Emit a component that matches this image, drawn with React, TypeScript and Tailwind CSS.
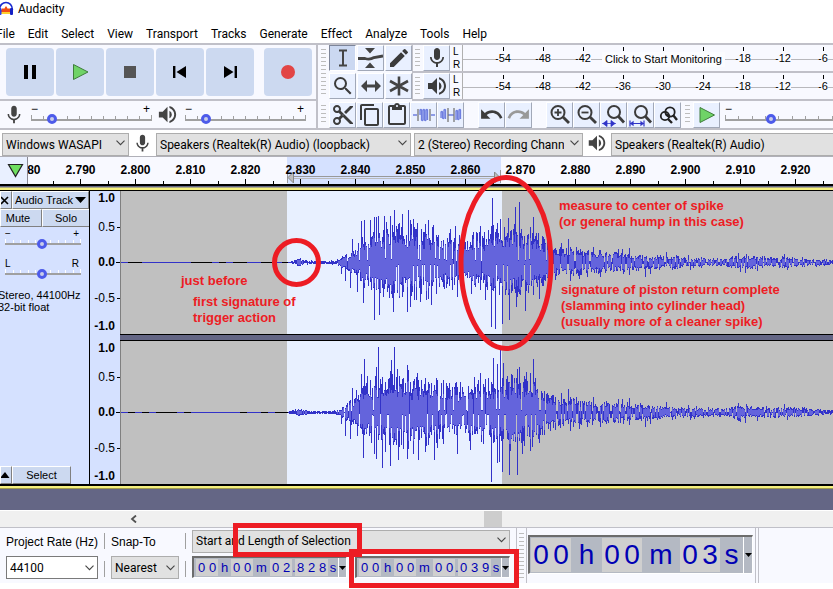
import type { ReactNode } from "react";
import { MdContentCopy, MdContentCut, MdContentPaste, MdEdit, MdMic, MdRedo, MdSearch, MdUndo, MdVolumeUp } from "react-icons/md";

type Spike = [number, number];

/* ---------- waveform data: [x, height] in pixels from the centre line ---------- */

const ENVELOPE: Spike[] = [
  [0, 0], [165, 0], [169, 1], [174, 3], [178, 4], [186, 2], [200, 1], [214, 2], [220, 5], [226, 11],
  [232, 16], [238, 24], [245, 34], [262, 42], [285, 44], [310, 41], [325, 35], [345, 31], [365, 34],
  [375, 42], [392, 42], [410, 38], [425, 28], [436, 18], [450, 18], [465, 15], [490, 11], [510, 10],
  [540, 7], [570, 6], [600, 4], [618, 8], [640, 6], [665, 6], [690, 4], [720, 2], [1100, 1],
];

const TAIL_UP: Spike[] = [
  [440, 19], [447, 23], [449, 15], [455, 15], [461, 11], [472, 15], [488, 8], [497, 13], [501, 13],
  [508, 14], [521, 7], [545, 10], [567, 7], [617, 9], [625, 8], [663, 8],
];
const TAIL_DOWN: Spike[] = [
  [434, 17], [449, 18], [458, 16], [466, 14], [479, 14], [492, 9], [502, 11], [508, 12], [524, 14],
  [529, 11], [551, 7], [569, 7], [619, 9], [624, 10], [636, 8], [666, 7],
];

const LEFT_UP: Spike[] = [
  [231, 23], [240, 41], [243, 42], [249, 42], [253, 45], [255, 45], [257, 46], [263, 46], [269, 46],
  [273, 52], [281, 48], [287, 52], [289, 42], [292, 43], [296, 39], [302, 30], [311, 35], [316, 25],
  [326, 24], [334, 36], [338, 27], [351, 27], [355, 30], [359, 36], [363, 30], [367, 32], [371, 64],
  [376, 39], [379, 43], [387, 44], [394, 55], [398, 60], [406, 27], [409, 35], [412, 45], [414, 26],
  [426, 21], ...TAIL_UP,
];
const LEFT_DOWN: Spike[] = [
  [220, 11], [224, 18], [229, 25], [236, 29], [242, 40], [253, 57], [258, 52], [262, 34], [272, 49],
  [281, 34], [286, 49], [289, 44], [295, 37], [299, 39], [310, 42], [315, 31], [336, 34], [350, 31],
  [364, 37], [370, 64], [374, 66], [381, 61], [388, 57], [395, 44], [399, 32], [404, 48], [412, 32],
  [418, 36], ...TAIL_DOWN,
];
const RIGHT_UP: Spike[] = [
  [231, 24], [235, 22], [240, 38], [243, 53], [246, 36], [249, 32], [255, 45], [257, 65], [259, 33],
  [264, 30], [269, 41], [270, 52], [273, 65], [276, 43], [286, 47], [289, 30], [293, 33], [296, 39],
  [300, 32], [304, 34], [316, 32], [322, 32], [328, 29], [334, 29], [339, 30], [353, 35], [359, 39],
  [364, 33], [367, 34], [372, 54], [376, 48], [379, 63], [382, 49], [386, 36], [390, 38], [396, 43],
  [398, 45], [405, 40], [412, 53], [414, 34], [420, 21], [426, 19], [432, 17], ...TAIL_UP,
];
const RIGHT_DOWN: Spike[] = [
  [220, 11], [224, 23], [229, 26], [236, 23], [242, 45], [253, 41], [255, 46], [261, 55], [264, 39],
  [269, 53], [272, 32], [277, 47], [286, 46], [292, 41], [297, 47], [304, 39], [313, 47], [316, 35],
  [322, 31], [336, 41], [349, 37], [362, 31], [370, 69], [376, 50], [378, 49], [381, 59], [388, 62],
  [396, 62], [401, 41], [409, 38], [418, 30], [423, 22], [432, 15], ...TAIL_DOWN,
];

function noise(n: number): number {
  const s = Math.sin(n * 127.1) * 43758.5453;
  return s - Math.floor(s);
}

function envelopeAt(x: number): number {
  for (let i = 1; i < ENVELOPE.length; i++) {
    const [x1, h1] = ENVELOPE[i];
    const [x0, h0] = ENVELOPE[i - 1];
    if (x <= x1) return h0 + ((h1 - h0) * (x - x0)) / (x1 - x0);
  }
  return 1;
}

function buildWave(up: Spike[], down: Spike[], seed: number) {
  const tops = new Map(up);
  const bottoms = new Map(down);
  let peak = "";
  let rms = "";
  for (let x = 0; x < 1100; x++) {
    const env = envelopeAt(x);
    const swell = 0.8 + 0.35 * noise(Math.floor(x / 4) + seed);
    const gapUp = noise(x + seed * 3) < 0.14 ? 0.1 : 1;
    const gapDown = noise(x + seed * 5) < 0.14 ? 0.1 : 1;
    const u = tops.get(x) ?? Math.round(env * swell * (0.38 + 0.55 * noise(x + seed)) * gapUp);
    const d = bottoms.get(x) ?? Math.round(env * swell * (0.34 + 0.52 * noise(x * 2 + seed)) * gapDown);
    if (env < 0.5) {
      if (noise(Math.floor(x / 7) + seed) > 0.45) peak += `M${x} 71h1v1h-1z`;
      continue;
    }
    peak += `M${x} ${71 - u}h1v${u + d + 1}h-1z`;
    const ru = Math.min(u - 1, Math.round(env * swell * (0.32 + 0.36 * noise(x * 3 + seed))));
    const rd = Math.min(d - 1, Math.round(env * swell * (0.32 + 0.36 * noise(x * 5 + seed))));
    if (ru > 0 && rd > 0) rms += `M${x} ${71 - ru}h1v${ru + rd + 1}h-1z`;
  }
  return { peak, rms };
}

const CHANNELS = [buildWave(LEFT_UP, LEFT_DOWN, 11), buildWave(RIGHT_UP, RIGHT_DOWN, 47)];

/* ---------- small shared parts ---------- */

function Grabber({ className = "" }: { className?: string }) {
  return (
    <div
      className={`w-[5px] shrink-0 bg-[repeating-linear-gradient(to_bottom,#bdbdbd_0px,#bdbdbd_1px,transparent_1px,transparent_4px)] ${className}`}
    />
  );
}

function ToolButton({
  label,
  active = false,
  disabled = false,
  children,
}: {
  label: string;
  active?: boolean;
  disabled?: boolean;
  children: ReactNode;
}) {
  return (
    <button
      aria-label={label}
      disabled={disabled}
      className={`flex h-[26px] w-[27px] shrink-0 items-center justify-center border ${
        active
          ? "border-[#7d8599] border-r-white border-b-white bg-[#cbd8f1]"
          : "border-white border-r-[#a1a8b8] border-b-[#a1a8b8] bg-[#e9f0ff]"
      } ${disabled ? "text-[#999]" : "text-[#3c3c3c]"}`}
    >
      {children}
    </button>
  );
}

function Slider({
  label,
  value,
  ticks,
  className,
  tickClass = "bg-[#a0a0a0]",
}: {
  label: string;
  value: number;
  ticks: number;
  className: string;
  tickClass?: string;
}) {
  return (
    <div className={`grid h-[12px] shrink-0 ${className}`}>
      <div className="col-start-1 row-start-1 flex h-[8px] items-end justify-between border-b-2 border-[#a0a0a0]">
        {Array.from({ length: ticks }, (_, i) => (
          <span key={i} className={`w-px ${i === 0 || i === ticks - 1 ? "h-[4px]" : "h-[3px]"} ${tickClass}`} />
        ))}
      </div>
      <input
        type="range"
        aria-label={label}
        min={0}
        max={100}
        defaultValue={value}
        className="col-start-1 row-start-1 m-0 h-[13px] w-full appearance-none bg-transparent [&::-webkit-slider-thumb]:size-[10px] [&::-webkit-slider-thumb]:appearance-none [&::-webkit-slider-thumb]:rounded-full [&::-webkit-slider-thumb]:border-3 [&::-webkit-slider-thumb]:border-[#4d5bea] [&::-webkit-slider-thumb]:bg-[#c9cde8]"
      />
    </div>
  );
}

function Dropdown({
  label,
  value,
  className,
  boxClass = "border-[#adadad] bg-[#e1e1e1]",
}: {
  label: string;
  value: string;
  className: string;
  boxClass?: string;
}) {
  return (
    <div className={`relative ${className}`}>
      <select
        id={label.replace(/\W+/g, "-")}
        aria-label={label}
        className={`h-full w-full appearance-none overflow-hidden border pr-[18px] pl-[3px] font-['Roboto','Noto_Sans',sans-serif] text-[12px] text-clip whitespace-nowrap text-black ${boxClass}`}
      >
        <option>{value}</option>
      </select>
      <svg className="pointer-events-none absolute top-1/2 right-[4px] -mt-[3px] h-[6px] w-[9px]" viewBox="0 0 9 6">
        <path d="M0.5 0.7 4.5 4.7 8.5 0.7" fill="none" stroke="#444" strokeWidth="1.1" />
      </svg>
    </div>
  );
}

function Magnifier({ children }: { children: ReactNode }) {
  return (
    <svg width="24" height="24" viewBox="0 0 24 24" fill="none" className="shrink-0">
      {children}
    </svg>
  );
}

/* ---------- toolbars ---------- */

const MENUS = ["File", "Edit", "Select", "View", "Transport", "Tracks", "Generate", "Effect", "Analyze", "Tools", "Help"];

function TitleAndMenu() {
  return (
    <header className="bg-white font-['Roboto','Noto_Sans',sans-serif] text-[12px] text-black">
      <div className="flex h-[18px] items-center">
        <svg className="-ml-[2px] h-[16px] w-[16px]" viewBox="0 0 16 16">
          <path d="M3 12V9l2-2 1 1 2-3 2 3 1-1 2 2v3z" fill="#f04a12" />
          <path d="M3 13v-2h10v2z" fill="#ffd12e" />
          <path d="M1.500 9C1.500-1 14.500-1 14.500 9" fill="none" stroke="#1a2bd0" strokeWidth="1.500" />
          <rect x="0.500" y="7" width="3" height="7" rx="1" fill="#2a3fe6" />
          <rect x="12" y="7" width="3" height="7" rx="1" fill="#1420c4" />
        </svg>
        <h1 className="ml-[4px]">Audacity</h1>
      </div>
      <nav className="-ml-[4px] flex h-[25px] items-center gap-[13px] pt-[6px]">
        {MENUS.map((m) => (
          <button key={m} className="h-[19px]">
            {m}
          </button>
        ))}
      </nav>
    </header>
  );
}

function TransportButton({ label, children }: { label: string; children: ReactNode }) {
  return (
    <button aria-label={label} className="flex size-[48px] items-center justify-center rounded-[4px] bg-[#ccd9f0]">
      <svg width="20" height="20" viewBox="0 0 20 20">
        {children}
      </svg>
    </button>
  );
}

function Transport() {
  return (
    <div className="flex h-[56px] items-center gap-[2px] border-t-2 border-[#c0c0c8] pl-[6px]">
      <TransportButton label="Pause">
        <path d="M4 3h4v14H4zM12 3h4v14h-4z" />
      </TransportButton>
      <TransportButton label="Play">
        <path d="M3.500 2.500 18 10 3.500 17.500z" fill="#6fd367" stroke="#3f7d3c" />
      </TransportButton>
      <TransportButton label="Stop">
        <path d="M4 4h12v12H4z" fill="#555" />
      </TransportButton>
      <TransportButton label="Skip to Start">
        <path d="M3 4h2.400v12H3zM16 4v12L6.500 10z" />
      </TransportButton>
      <TransportButton label="Skip to End">
        <path d="M14.600 4H17v12h-2.400zM4 4v12l9.500-6z" />
      </TransportButton>
      <div className="w-[6px]" />
      <TransportButton label="Record">
        <circle cx="10" cy="10" r="7" fill="#e24545" />
      </TransportButton>
    </div>
  );
}

function MixerSlider({ label, value }: { label: string; value: number }) {
  return (
    <div className="w-[121px]">
      <div className="flex h-[8px] items-center justify-between pr-[2px] text-[12px] leading-none">
        <span>−</span>
        <span>+</span>
      </div>
      <Slider label={label} value={value} ticks={11} className="w-[121px]" />
    </div>
  );
}

function Mixer() {
  return (
    <div className="flex h-[29px] items-center border-t-2 border-[#c0c0c8] pl-[3px]">
      <MdMic className="size-[22px] text-[#444]" />
      <div className="w-[6px]" />
      <MixerSlider label="Recording volume" value={14} />
      <MdVolumeUp className="ml-[4px] size-[23px] text-[#444]" />
      <div className="w-[6px]" />
      <MixerSlider label="Playback volume" value={14} />
    </div>
  );
}

function Tools() {
  return (
    <div className="grid grid-cols-[27px_27px_27px] grid-rows-[27px_27px] gap-px pl-[3px]">
      <ToolButton label="Selection tool" active>
        <svg width="20" height="20" viewBox="0 0 20 20" fill="none" stroke="#444" strokeWidth="2">
          <path d="M6 2.500h8M6 17.500h8M10 2.500v15" />
        </svg>
      </ToolButton>
      <ToolButton label="Envelope tool">
        <svg width="25" height="22" viewBox="0 0 25 22">
          <path d="M0 11.500h7q5 1.500 9-1l9-1.500" fill="none" stroke="#444" strokeWidth="2.800" />
          <path d="M7 1h10l-5 5.500zM7 21h10l-5-5.500z" fill="#444" />
        </svg>
      </ToolButton>
      <ToolButton label="Draw tool">
        <MdEdit className="size-[24px]" />
      </ToolButton>
      <ToolButton label="Zoom tool">
        <MdSearch className="size-[24px]" />
      </ToolButton>
      <ToolButton label="Time shift tool">
        <svg width="22" height="20" viewBox="0 0 22 20">
          <path d="M1 10l6-6v4.500h8V4l6 6-6 6v-4.500H7V16z" fill="#444" />
        </svg>
      </ToolButton>
      <ToolButton label="Multi-tool">
        <svg width="22" height="22" viewBox="0 0 22 22" fill="none" stroke="#444" strokeWidth="2.600">
          <path d="M11 1.500v19M2 6l18 10M20 6 2 16" />
        </svg>
      </ToolButton>
    </div>
  );
}

const LEVELS = ["-54", "-48", "-42", "-36", "-30", "-24", "-18", "-12", "-6"];
const COVERED_BY_MESSAGE = ["-36", "-30", "-24"];

function Meter({ label, icon, message }: { label: string; icon: ReactNode; message?: string }) {
  return (
    <div className="flex h-[28px] items-start border-b-2 border-[#c0c0c8]">
      <Grabber className="mt-[4px] ml-[2px] h-[20px]" />
      <div className="w-[3px]" />
      <ToolButton label={label}>{icon}</ToolButton>
      <div className="w-[12px] pl-[3px] text-[10px] leading-[13px]">
        <div>L</div>
        <div>R</div>
      </div>
      <div className="relative h-[26px] min-w-0 flex-1 overflow-hidden border-l border-[#b0b0b0] bg-[linear-gradient(#b8b8bc,#b8b8bc)] bg-[length:100%_1px] bg-[position:0_14px] bg-no-repeat pl-[20px]">
        <div className="flex">
          {LEVELS.map((l) => (
            <div key={l} className="flex w-[40px] shrink-0 flex-col items-center text-[11px] leading-[12px]">
              <span className="mt-[2px] h-[4px] w-px bg-black" />
              {!(message && COVERED_BY_MESSAGE.includes(l)) && <span className="mt-px bg-[#f8f9ff]">{l}</span>}
            </div>
          ))}
        </div>
        {message && (
          <button className="absolute top-[7px] left-[139px] h-[15px] bg-[#fbfcff] px-[3px] text-[11px] leading-[15px] whitespace-nowrap">
            {message}
          </button>
        )}
      </div>
    </div>
  );
}

function EditToolbar() {
  return (
    <div className="flex h-[28px] items-center overflow-hidden pl-[3px]">
      <Grabber className="h-[20px]" />
      <div className="flex pl-[3px]">
        <ToolButton label="Cut">
          <MdContentCut className="size-[24px] shrink-0" />
        </ToolButton>
        <ToolButton label="Copy">
          <MdContentCopy className="size-[24px] shrink-0" />
        </ToolButton>
        <ToolButton label="Paste">
          <MdContentPaste className="size-[24px] shrink-0" />
        </ToolButton>
        <ToolButton label="Trim audio">
          <svg width="22" height="20" viewBox="0 0 22 20" fill="none" stroke="#6f7fe0" strokeWidth="1.300">
            <path d="M0 10h4M18 10h4" />
            <path d="M5 4v12M17 4v12" stroke="#777" />
            <path d="M7 10V5q1-1 1.500 0v10q1 1 1.500 0V5q1-1 1.500 0v10q1 1 1.500 0V5q1-1 1.500 0v10" />
          </svg>
        </ToolButton>
        <ToolButton label="Silence audio">
          <svg width="22" height="20" viewBox="0 0 22 20" fill="none" stroke="#6f7fe0" strokeWidth="1.300">
            <path d="M1 13V7q1-1 1.500 0v6q1 1 1.500 0V5q1-1 1.500 0v9M16 15V6q1-1 1.500 0v8q1 1 1.500 0V5q1-1 1.500 0v9M8 10h6" />
            <path d="M8 3v14M14 3v14" stroke="#777" />
          </svg>
        </ToolButton>
      </div>
      <div className="flex pl-[14px]">
        <ToolButton label="Undo">
          <MdUndo className="size-[25px] shrink-0" />
        </ToolButton>
        <ToolButton label="Redo" disabled>
          <MdRedo className="size-[25px] shrink-0" />
        </ToolButton>
      </div>
      <div className="flex pl-[14px]">
        <ToolButton label="Zoom in">
          <Magnifier>
            <circle cx="10" cy="9.500" r="6.500" stroke="#3c3c3c" strokeWidth="2" />
            <path d="m15 14 6 6" stroke="#3c3c3c" strokeWidth="2.800" />
            <path d="M6.500 9.500h7M10 6v7" stroke="#3c3c3c" strokeWidth="1.800" />
          </Magnifier>
        </ToolButton>
        <ToolButton label="Zoom out">
          <Magnifier>
            <circle cx="10" cy="9.500" r="6.500" stroke="#3c3c3c" strokeWidth="2" />
            <path d="m15 14 6 6" stroke="#3c3c3c" strokeWidth="2.800" />
            <path d="M6.500 9.500h7" stroke="#3c3c3c" strokeWidth="1.800" />
          </Magnifier>
        </ToolButton>
        <ToolButton label="Fit selection to width">
          <Magnifier>
            <circle cx="12" cy="9" r="6" stroke="#3c3c3c" strokeWidth="2" />
            <path d="m16.500 13.500 5.500 6" stroke="#3c3c3c" strokeWidth="2.800" />
            <path d="M5 17.500v6l-4-3zM9 17.500v6l4-3zM0 20.500h14" fill="#2f33c8" stroke="#2f33c8" strokeWidth="0.800" />
          </Magnifier>
        </ToolButton>
        <ToolButton label="Fit project to width">
          <Magnifier>
            <circle cx="12" cy="9" r="6" stroke="#3c3c3c" strokeWidth="2" />
            <path d="m16.500 13.500 5.500 6" stroke="#3c3c3c" strokeWidth="2.800" />
            <path d="M1 17.500v6M15 17.500v6M1 20.500h14M4 19v3l-2-1.500zM12 19v3l2-1.500z" fill="#2f33c8" stroke="#2f33c8" strokeWidth="1.200" />
          </Magnifier>
        </ToolButton>
        <ToolButton label="Zoom toggle">
          <Magnifier>
            <circle cx="14" cy="9" r="4.700" stroke="#222" strokeWidth="1.800" />
            <circle cx="9" cy="13" r="4.200" stroke="#222" strokeWidth="1.800" />
            <path d="m17 12 4 5M12 16l4 4M10 11l4 3" stroke="#222" strokeWidth="2.400" />
          </Magnifier>
        </ToolButton>
      </div>
      <Grabber className="ml-[4px] h-[20px]" />
      <div className="flex shrink-0 pl-[3px]">
        <ToolButton label="Play at speed">
          <svg width="18" height="18" viewBox="0 0 18 18">
            <path d="M2 1.500 16.500 9 2 16.500z" fill="#6fd367" stroke="#3f7d3c" />
          </svg>
        </ToolButton>
      </div>
      <div className="shrink-0 pl-[5px]">
        <div className="h-[8px] text-[12px] leading-[8px]">−</div>
        <Slider label="Playback speed" value={37} ticks={10} className="w-[121px]" />
      </div>
    </div>
  );
}

function DeviceBar() {
  return (
    <div className="flex h-[28px] items-center overflow-hidden border-t-2 border-[#c0c0c8] pl-[2px]">
      <Dropdown label="Audio host" value="Windows WASAPI" className="h-[23px] w-[127px] shrink-0" />
      <MdMic className="mx-[3px] size-[21px] shrink-0 text-[#444]" />
      <Dropdown
        label="Recording device"
        value="Speakers (Realtek(R) Audio) (loopback)"
        className="h-[23px] w-[255px] shrink-0"
      />
      <div className="w-[3px] shrink-0" />
      <Dropdown
        label="Recording channels"
        value="2 (Stereo) Recording Chann"
        className="h-[23px] w-[169px] shrink-0"
      />
      <MdVolumeUp className="mx-[3px] size-[22px] shrink-0 text-[#444]" />
      <Dropdown label="Playback device" value="Speakers (Realtek(R) Audio)" className="-mr-[24px] h-[23px] min-w-0 flex-1" />
    </div>
  );
}

/* ---------- timeline ---------- */

const TIMES = Array.from({ length: 26 }, (_, i) => (2.78 + i * 0.01).toFixed(3));

function Timeline() {
  return (
    <div className="flex h-[28px] border-t border-[#b0b0b8] bg-[#f8f9ff]">
      <button
        aria-label="Pinned play head"
        className="flex w-[28px] shrink-0 items-center justify-center border-r border-[#8a8a94] bg-[#e9f0ff] pl-[3px]"
      >
        <svg width="17" height="15" viewBox="0 0 17 15">
          <path d="M1.500 1.500h14L8.500 13.500z" fill="#6fdf60" stroke="#222" strokeWidth="1.200" />
        </svg>
      </button>
      <div className="relative min-w-0 flex-1 overflow-hidden">
        <div className="absolute inset-y-0 left-[259px] w-[214px] bg-[#d5e1ff]">
          <svg className="absolute top-[13px] left-0 h-[13px] w-[214px]" viewBox="0 0 214 13">
            <path d="M0.500 0v13M213.500 0v13M6 6.500h202" stroke="#999" fill="none" />
            <path d="M6 8.500h202" stroke="#bbb" />
            <path d="M1 7.500 6.500 2v11zM213 7.500 207.500 2v11z" fill="#bdbdbd" stroke="#888" />
          </svg>
        </div>
        <div className="relative -ml-[30px] flex h-full">
          {TIMES.map((t) => (
            <div key={t} className="flex w-[55px] shrink-0 flex-col justify-between">
              <span className="pt-[6px] text-center text-[12px] leading-[15px] font-bold">{t}</span>
              <div className="flex items-end">
                <span className="h-[3px] w-[27px] border-l border-black" />
                <span className="h-[5px] w-[28px] border-l border-black" />
              </div>
            </div>
          ))}
        </div>
      </div>
    </div>
  );
}

/* ---------- track ---------- */

const PANEL_BUTTON = "border border-white border-r-[#808080] border-b-[#808080] bg-[#ccd9f0] text-[11px] leading-none";

function PanelSlider({ label, low, high }: { label: string; low: string; high: string }) {
  return (
    <div className="h-[30px] pr-[8px] pl-[5px]">
      <div className="flex h-[8px] items-start justify-between pr-[2px] text-[10px] leading-[10px]">
        <span>{low}</span>
        <span>{high}</span>
      </div>
      <Slider label={label} value={49} ticks={11} className="w-[76px]" tickClass="bg-white" />
    </div>
  );
}

function TrackPanel() {
  return (
    <aside className="flex w-[90px] shrink-0 flex-col overflow-hidden border-r border-black bg-[#d5e1ff]">
      <div className="flex h-[18px]">
        <button aria-label="Close track" className={`w-[12px] ${PANEL_BUTTON}`}>
          <svg width="9" height="9" viewBox="0 0 9 9" fill="none" stroke="#000" strokeWidth="1.600">
            <path d="m0 1 7 7M7 1 0 8" />
          </svg>
        </button>
        <button className={`flex flex-1 items-center justify-between pr-[2px] pl-[2px] ${PANEL_BUTTON}`}>
          Audio Track
          <svg width="11" height="6" viewBox="0 0 11 6">
            <path d="M0 0h11L5.500 6z" />
          </svg>
        </button>
      </div>
      <div className="grid h-[18px] grid-cols-[42px_48px]">
        <button className={`pr-[6px] ${PANEL_BUTTON}`}>Mute</button>
        <button className={PANEL_BUTTON}>Solo</button>
      </div>
      <div className="pt-[2px]">
        <PanelSlider label="Gain" low="−" high="+" />
        <PanelSlider label="Pan" low="L" high="R" />
      </div>
      <div className="-ml-[2px] text-[11px] leading-[12px] whitespace-nowrap">
        <p>Stereo, 44100Hz</p>
        <p>32-bit float</p>
      </div>
      <div className="mt-auto flex h-[18px]">
        <button aria-label="Collapse track" className={`w-[12px] ${PANEL_BUTTON}`}>
          <svg width="9" height="6" viewBox="0 0 9 6">
            <path d="M-1 6h9.500L4 0z" />
          </svg>
        </button>
        <button className={`w-[59px] ${PANEL_BUTTON}`}>Select</button>
      </div>
    </aside>
  );
}

function AmplitudeRuler() {
  return (
    <div className="flex h-[143px] w-[31px] shrink-0 flex-col border-r border-[#808080] bg-[#d5e1ff] text-[12px] leading-[14px]">
      <div className="pr-[5px] text-right font-bold">1.0</div>
      <div className="mt-[15px] flex items-center justify-end">
        0.5
        <span className="ml-[2px] h-px w-[3px] bg-black" />
      </div>
      <div className="mt-[21px] flex items-center justify-end font-bold">
        0.0
        <span className="ml-px h-px w-[4px] bg-black" />
      </div>
      <div className="mt-[22px] flex items-center justify-end">
        -0.5
        <span className="ml-[2px] h-px w-[3px] bg-black" />
      </div>
      <div className="mt-auto mb-px pr-[5px] text-right font-bold">-1.0</div>
    </div>
  );
}

function Channel({ index }: { index: number }) {
  const wave = CHANNELS[index];
  return (
    <div className="flex h-[143px]">
      <AmplitudeRuler />
      <div className="min-w-0 flex-1 overflow-hidden bg-[#c0c0c0]">
        <svg width="1100" height="143" viewBox="0 0 1100 143" shapeRendering="crispEdges">
          <rect x="166" y="0" width="215" height="143" fill="#e8f0ff" />
          <rect x="0" y="71" width="1100" height="1" fill="#000" />
          <path d={wave.peak} fill="#3232c8" />
          <path d={wave.rms} fill="#6464dc" />
        </svg>
      </div>
    </div>
  );
}

const NOTE = "absolute text-[13px] leading-[16px] font-bold whitespace-nowrap text-[#ed1c24]";

function Track() {
  return (
    <main className="relative">
      <div className="h-[7px] border-t-2 border-b border-black bg-[linear-gradient(#646685_0,#646685_1px,#f5f07e_2px)]" />
      <div className="flex">
        <TrackPanel />
        <div className="min-w-0 flex-1 bg-[#d5e1ff]">
          <Channel index={0} />
          <div className="ml-[30px] h-[7px] border-y border-black bg-[#646685]" />
          <Channel index={1} />
        </div>
      </div>
      <div className="h-[5px] border-t-2 border-b border-t-black border-b-[#a09c50] bg-[#f5f07e]" />
      <div className="h-[21px] bg-[#646685]" />
      <p className={`top-[89px] left-[181px] ${NOTE}`}>just before</p>
      <p className={`top-[110px] left-[193px] ${NOTE}`}>
        first signature of
        <br />
        trigger action
      </p>
      <p className={`top-[14px] left-[559px] ${NOTE}`}>
        measure to center of spike
        <br />
        (or general hump in this case)
      </p>
      <p className={`top-[98px] left-[561px] ${NOTE}`}>
        signature of piston return complete
        <br />
        (slamming into cylinder head)
        <br />
        (usually more of a cleaner spike)
      </p>
    </main>
  );
}

function ScrollBar() {
  return (
    <div className="flex h-[17px] items-center border-t border-white bg-[#f0f0f0]">
      <button aria-label="Scroll left" className="ml-[125px] flex w-[17px] justify-center">
        <svg width="7" height="8" viewBox="0 0 7 8">
          <path d="M6 0.500 2 4l4 3.500" fill="none" stroke="#505050" strokeWidth="1.800" />
        </svg>
      </button>
      <div className="ml-[342px] h-[16px] w-[18px] bg-[#cdcdcd]" />
    </div>
  );
}

/* ---------- selection bar ---------- */

interface TimePart {
  text: string;
  unit?: boolean;
  width: string;
}

function TimeField({ label, parts, big = false }: { label: string; parts: TimePart[]; big?: boolean }) {
  return (
    <div
      role="group"
      aria-label={label}
      className={`flex shrink-0 border border-t-2 border-l-2 border-[#6c6c6c] border-r-white border-b-white bg-[#b4b9c3] text-[#0000b4] ${
        big ? "h-[39px] w-[225px] pl-px text-[28px]" : "h-[22px] w-[155px] pl-[2px] text-[13px]"
      }`}
    >
      {parts.map((p, i) => (
        <span key={i} className={`my-px flex items-center ${p.width} ${p.unit ? "" : "bg-[#cfcfcf]"}`}>
          {p.text.split("").map((c, j) => (
            <span key={j} className="flex-1 text-center leading-none">
              {c}
            </span>
          ))}
        </span>
      ))}
      <button aria-label={`${label} format`} className="flex flex-1 items-center justify-center border-l border-white">
        <svg width="7" height="4" viewBox="0 0 7 4" className="shrink-0">
          <path d="M0 0h7L3.500 4z" />
        </svg>
      </button>
    </div>
  );
}

const smallParts = (sec: string, ms: string): TimePart[] => [
  { text: "00", width: "w-[22px]" },
  { text: "h", unit: true, width: "w-[13px]" },
  { text: "00", width: "w-[22px]" },
  { text: "m", unit: true, width: "w-[17px]" },
  { text: sec, width: "w-[22px]" },
  { text: ".", unit: true, width: "w-[3px]" },
  { text: ms, width: "w-[33px]" },
  { text: "s", unit: true, width: "w-[10px]" },
];

const BIG_PARTS: TimePart[] = [
  { text: "00", width: "w-[40px]" },
  { text: "h", unit: true, width: "w-[31px]" },
  { text: "00", width: "w-[40px]" },
  { text: "m", unit: true, width: "w-[38px]" },
  { text: "03", width: "w-[40px]" },
  { text: "s", unit: true, width: "w-[23px]" },
];

function SelectionBar() {
  return (
    <footer className="flex h-[56px] overflow-hidden border-t border-[#c0c0c8] bg-[#f8f9ff]">
      <div className="ml-[6px] flex w-[92px] shrink-0 flex-col text-[12px] whitespace-nowrap">
        <label htmlFor="Project-rate" className="h-[28px] leading-[28px]">
          Project Rate (Hz)
        </label>
        <Dropdown label="Project rate" value="44100" className="h-[23px]" boxClass="border-[#7a7a7a] bg-white" />
      </div>
      <div className="ml-[6px] flex flex-col gap-[12px] pt-[5px]">
        <span className="h-[16px] w-px bg-[#a0a0a0]" />
        <span className="h-[16px] w-px bg-[#a0a0a0]" />
      </div>
      <div className="ml-[6px] flex w-[68px] shrink-0 flex-col text-[12px] whitespace-nowrap">
        <label htmlFor="Snap-to" className="h-[28px] leading-[28px]">
          Snap-To
        </label>
        <Dropdown label="Snap to" value="Nearest" className="h-[23px]" />
      </div>
      <div className="ml-[6px] flex flex-col gap-[12px] pt-[5px]">
        <span className="h-[16px] w-px bg-[#a0a0a0]" />
        <span className="h-[16px] w-px bg-[#a0a0a0]" />
      </div>
      <div className="ml-[6px] w-[318px] shrink-0">
        <Dropdown label="Selection mode" value="Start and Length of Selection" className="h-[23px]" />
        <div className="mt-[5px] flex justify-between">
          <TimeField label="Selection start" parts={smallParts("02", "828")} />
          <TimeField label="Selection length" parts={smallParts("00", "039")} />
        </div>
      </div>
      <div className="ml-[6px] flex w-[11px] shrink-0 justify-center border-x border-[#c0c0c8] pt-[5px]">
        <Grabber className="h-[46px]" />
      </div>
      <div className="ml-px pt-[7px]">
        <TimeField label="Audio position" parts={BIG_PARTS} big />
      </div>
      <div className="ml-[2px] w-[4px] border-x border-[#c0c0c8]" />
    </footer>
  );
}

/* ---------- red pen marks drawn over the window ---------- */

function PenMarks() {
  return (
    <svg
      className="pointer-events-none absolute top-0 left-0"
      width="833"
      height="589"
      viewBox="0 0 833 589"
      fill="none"
      stroke="#ed1c24"
      strokeWidth="5"
    >
      <circle cx="296.500" cy="262.500" r="22" />
      <ellipse cx="506" cy="263" rx="45" ry="85.500" />
      <rect x="235.500" y="525.500" width="124" height="29" />
      <rect x="351.500" y="551.500" width="165" height="34" />
    </svg>
  );
}

export default function App() {
  return (
    <div className="relative min-h-screen overflow-hidden bg-white font-['Liberation_Sans',Arial,sans-serif] text-black">
      <TitleAndMenu />
      <div className="flex h-[85px] overflow-hidden bg-[#f8f9ff]">
        <div className="w-[318px] shrink-0 border-r-2 border-[#c0c0c8]">
          <Transport />
          <Mixer />
        </div>
        <div className="flex min-w-0 flex-1 flex-col border-t-2 border-[#c0c0c8]">
          <div className="flex h-[56px]">
            <Grabber className="mt-[4px] ml-[3px] h-[46px]" />
            <Tools />
            <div className="min-w-0 flex-1 border-l border-[#c0c0c8]">
              <Meter
                label="Record meter"
                icon={<MdMic className="size-[24px] shrink-0" />}
                message="Click to Start Monitoring"
              />
              <Meter label="Playback meter" icon={<MdVolumeUp className="size-[24px] shrink-0" />} />
            </div>
          </div>
          <EditToolbar />
        </div>
      </div>
      <DeviceBar />
      <Timeline />
      <Track />
      <ScrollBar />
      <SelectionBar />
      <PenMarks />
    </div>
  );
}
